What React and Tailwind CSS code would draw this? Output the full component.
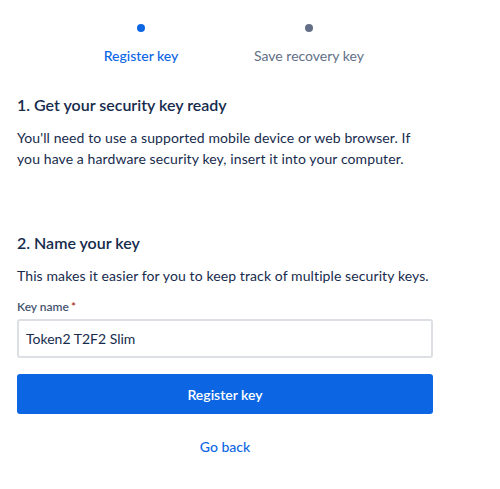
export default function App() {
  return (
    <div className="w-[500px] h-[489px] bg-white" style={{ fontFamily: 'Lato, "Noto Sans", sans-serif' }}>
      <div className="w-[416px] ml-[17px] pt-[18px]">
        <div className="flex justify-center">
          <div className="flex flex-col items-center w-[168px]">
            <div className="w-[8px] h-[8px] rounded-full bg-[#0c66e4] mt-[6px]" />
            <div className="mt-[14px] text-[14px] leading-[20px] font-medium text-[#0c66e4]">Register key</div>
          </div>
          <div className="flex flex-col items-center w-[168px]">
            <div className="w-[8px] h-[8px] rounded-full bg-[#626f86] mt-[6px]" />
            <div className="mt-[14px] text-[14px] leading-[20px] text-[#626f86]">Save recovery key</div>
          </div>
        </div>
        <h2 className="mt-[29px] text-[16px] leading-[20px] font-semibold text-[#172b4d]">1. Get your security key ready</h2>
        <p className="mt-[12px] text-[14px] leading-[21px] tracking-[0.1px] text-[#172b4d]">
          You'll need to use a supported mobile device or web browser. If you have a hardware security key, insert it into your computer.
        </p>
        <h2 className="mt-[64px] text-[16px] leading-[20px] font-semibold text-[#172b4d]">2. Name your key</h2>
        <p className="mt-[12px] text-[14px] leading-[21px] tracking-[0.1px] text-[#172b4d]">
          This makes it easier for you to keep track of multiple security keys.
        </p>
        <div className="mt-[13px] text-[12px] leading-[16px] font-semibold text-[#44546f]">
          Key name<span className="text-[#ae2e24] ml-[2px]">*</span>
        </div>
        <div className="mt-[4px] h-[39px] border-2 border-[#dcdfe4] rounded-[3px] flex items-center px-[7px] text-[14px] text-[#172b4d]">
          Token2 T2F2 Slim
        </div>
        <button className="mt-[16px] w-full h-[40px] bg-[#0c66e4] rounded-[3px] text-white text-[14px] font-semibold">
          Register key
        </button>
        <div className="mt-[22px] text-center text-[14px] font-medium text-[#0c66e4]">Go back</div>
      </div>
    </div>
  );
}
